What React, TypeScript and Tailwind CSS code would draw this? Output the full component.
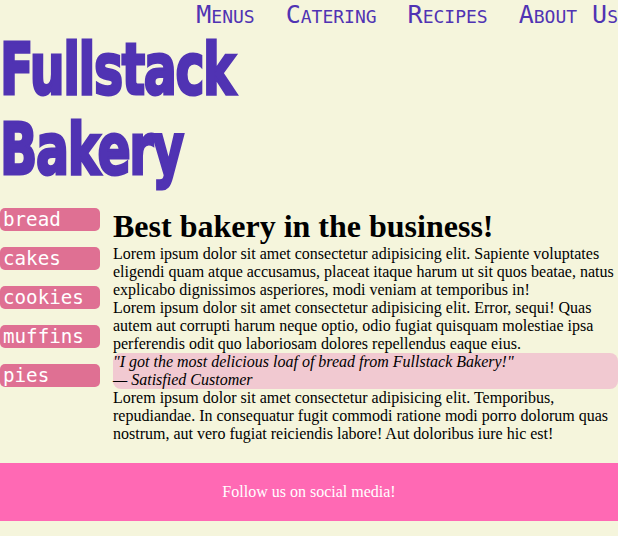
import React from "react";

export default function App() {
  const cats = ["bread", "cakes", "cookies", "muffins", "pies"];
  const nav = ["Menus", "Catering", "Recipes", "About Us"];
  return (
    <div className="min-h-[536px] bg-[#f5f5dc] font-['Liberation_Serif',serif] text-[16px] text-black overflow-hidden">
      <nav className="flex justify-end gap-[31px] whitespace-nowrap font-['DejaVu_Sans_Mono',monospace] text-[25px] leading-[29px] [font-variant:small-caps] text-[#5033b3]">
        {nav.map((n) => (
          <span key={n}>{n}</span>
        ))}
      </nav>
      <h1 className="mt-px mb-[18px] font-['DejaVu_Sans',sans-serif] font-bold text-[71px] leading-[80px] tracking-[-2px] text-[#5033b3] [-webkit-text-stroke:3px_#5033b3]">
        <span className="inline-block origin-left scale-x-[0.69]">Fullstack</span>
        <br />
        <span className="inline-block origin-left scale-x-[0.69]">Bakery</span>
      </h1>
      <div className="flex gap-[13px]">
        <ul className="w-[100px] shrink-0 flex flex-col gap-[16px]">
          {cats.map((c) => (
            <li
              key={c}
              className="h-[23px] rounded-[5px] bg-[#df7093] pl-[3px] font-['DejaVu_Sans_Mono',monospace] text-[19.2px] leading-[23px] text-white"
            >
              {c}
            </li>
          ))}
        </ul>
        <main className="flex-1 leading-[18px]">
          <h2 className="font-bold text-[32px] leading-[37px]">Best bakery in the business!</h2>
          <p>
            Lorem ipsum dolor sit amet consectetur adipisicing elit. Sapiente voluptates eligendi quam atque
            accusamus, placeat itaque harum ut sit quos beatae, natus explicabo dignissimos asperiores, modi
            veniam at temporibus in!
          </p>
          <p>
            Lorem ipsum dolor sit amet consectetur adipisicing elit. Error, sequi! Quas autem aut corrupti harum
            neque optio, odio fugiat quisquam molestiae ipsa perferendis odit quo laboriosam dolores repellendus
            eaque eius.
          </p>
          <blockquote className="rounded-[8px] bg-[#f1c9d1] italic">
            "I got the most delicious loaf of bread from Fullstack Bakery!"
            <br />— Satisfied Customer
          </blockquote>
          <p>
            Lorem ipsum dolor sit amet consectetur adipisicing elit. Temporibus, repudiandae. In consequatur fugit
            commodi ratione modi porro dolorum quas nostrum, aut vero fugiat reiciendis labore! Aut doloribus iure
            hic est!
          </p>
        </main>
      </div>
      <footer className="mt-[20px] bg-[#ff69b4] py-[20px] text-center leading-[18px] text-white">
        Follow us on social media!
      </footer>
    </div>
  );
}
